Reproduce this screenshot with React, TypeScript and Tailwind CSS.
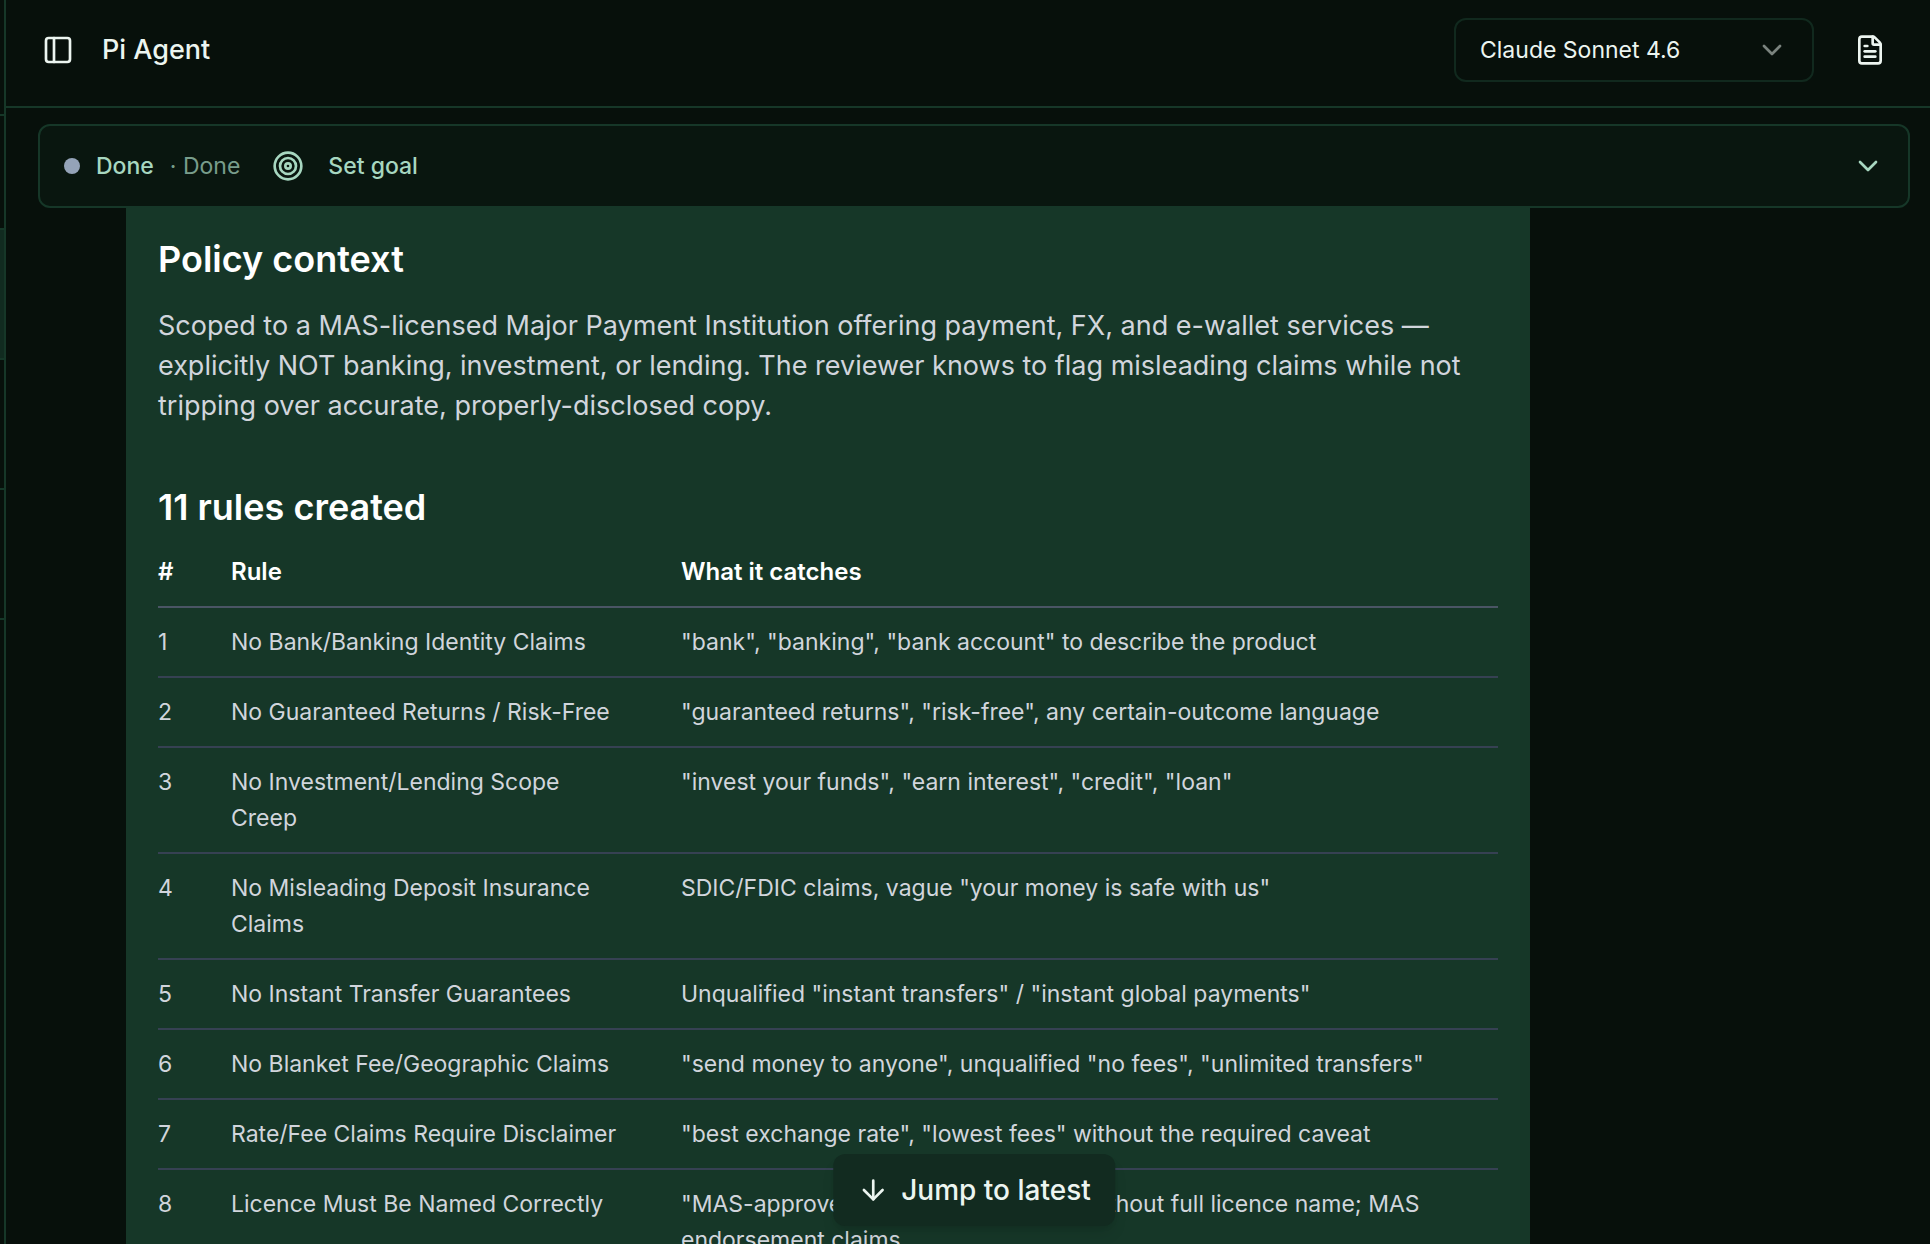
import { useState } from 'react';
import { ArrowDown, ChevronDown, FileText, PanelLeft, Target } from 'lucide-react';

type Rule = { id: number; name: string; catches: string };

const RULES: Rule[] = [
  { id: 1, name: 'No Bank/Banking Identity Claims', catches: '"bank", "banking", "bank account" to describe the product' },
  { id: 2, name: 'No Guaranteed Returns / Risk-Free', catches: '"guaranteed returns", "risk-free", any certain-outcome language' },
  { id: 3, name: 'No Investment/Lending Scope Creep', catches: '"invest your funds", "earn interest", "credit", "loan"' },
  { id: 4, name: 'No Misleading Deposit Insurance Claims', catches: 'SDIC/FDIC claims, vague "your money is safe with us"' },
  { id: 5, name: 'No Instant Transfer Guarantees', catches: 'Unqualified "instant transfers" / "instant global payments"' },
  { id: 6, name: 'No Blanket Fee/Geographic Claims', catches: '"send money to anyone", unqualified "no fees", "unlimited transfers"' },
  { id: 7, name: 'Rate/Fee Claims Require Disclaimer', catches: '"best exchange rate", "lowest fees" without the required caveat' },
  { id: 8, name: 'Licence Must Be Named Correctly', catches: '"MAS-approved", "MAS-authorised" without full licence name; MAS endorsement claims' },
];

// Only the right edge of the session list is in view
function SessionRail() {
  return (
    <aside className="w-[6px] shrink-0 border-r-2 border-[#163728]">
      <div className="h-[116px] border-b-2 border-[#163728]" />
      <div className="h-[114px] border-b-2 border-[#163728]" />
      <div className="h-[130px] border-b-2 border-[#163728] bg-[#112b20]" />
      <div className="h-[130px] border-b-2 border-[#163728]" />
      <div className="h-[130px] border-b-2 border-[#163728]" />
    </aside>
  );
}

function Header() {
  const [model, setModel] = useState('sonnet-4.6');

  return (
    <header className="flex items-center justify-between border-b-2 border-[#163728] pt-[18px] pr-11 pb-6 pl-9">
      <div className="flex items-center gap-7">
        <button type="button" aria-label="Toggle sidebar">
          <PanelLeft className="size-8" />
        </button>
        <h1 className="text-[27px] leading-10 font-medium">Pi Agent</h1>
      </div>
      <div className="flex items-center gap-10">
        <div className="relative">
          <select
            aria-label="Model"
            value={model}
            onChange={(e) => setModel(e.target.value)}
            className="h-16 w-[360px] appearance-none rounded-xl border-2 border-[#11291e] bg-transparent px-6 text-[23px]"
          >
            <option value="sonnet-4.6">Claude Sonnet 4.6</option>
          </select>
          <ChevronDown className="pointer-events-none absolute top-4 right-[26px] size-8 opacity-50" />
        </div>
        <button type="button" aria-label="Open notes">
          <FileText className="size-8" />
        </button>
      </div>
    </header>
  );
}

function StatusBar() {
  return (
    <div className="flex h-[84px] items-center rounded-xl border-2 border-[#163728] bg-[#09160f] px-6 text-[23px] text-[#a7d7c0]">
      <span className="size-4 rounded-full bg-[#94a3b8]" />
      <span className="ml-4 font-medium">Done</span>
      <span className="ml-4 opacity-70">· Done</span>
      <button type="button" className="ml-8 flex items-center gap-6 font-medium">
        <Target className="size-8" />
        Set goal
      </button>
      <button type="button" aria-label="Expand status" className="ml-auto">
        <ChevronDown className="size-8" />
      </button>
    </div>
  );
}

function RulesTable() {
  return (
    <table className="w-full table-fixed text-left text-[23px] leading-9">
      <thead>
        <tr className="border-b-2 border-gray-600 text-2xl leading-9 text-white">
          <th className="w-[73px] py-4 font-semibold">#</th>
          <th className="w-[450px] py-4 pr-14 font-semibold">Rule</th>
          <th className="py-4 font-semibold">What it catches</th>
        </tr>
      </thead>
      <tbody>
        {RULES.map((rule) => (
          <tr key={rule.id} className="border-b-2 border-gray-700 align-top">
            <td className="py-4">{rule.id}</td>
            <td className="py-4 pr-14">{rule.name}</td>
            <td className="py-4 pr-14">{rule.catches}</td>
          </tr>
        ))}
      </tbody>
    </table>
  );
}

export default function App() {
  return (
    <div className="flex h-screen overflow-hidden bg-[#07100b] font-['Inter',sans-serif] text-[#ecf5f0]">
      <SessionRail />
      <main className="flex min-w-0 flex-1 flex-col">
        <Header />
        <div className="relative mr-5 ml-8 min-h-0 flex-1">
          <div className="h-full overflow-hidden pt-4">
            <StatusBar />
            <article className="ml-[88px] w-3/4 bg-[#163728] px-8 pt-7 text-gray-300">
              <h2 className="text-4xl leading-[46px] font-semibold text-white">Policy context</h2>
              <p className="mt-6 text-[27px] leading-10">
                Scoped to a MAS-licensed Major Payment Institution offering payment, FX, and e-wallet services —
                explicitly NOT banking, investment, or lending. The reviewer knows to flag misleading claims while not
                tripping over accurate, properly-disclosed copy.
              </p>
              <h2 className="mt-[58px] mb-2 text-4xl leading-[46px] font-semibold text-white">11 rules created</h2>
              <RulesTable />
            </article>
          </div>
          <button
            type="button"
            className="absolute bottom-[18px] left-1/2 flex h-18 -translate-x-1/2 items-center gap-3 rounded-xl bg-[#122b20] px-6 text-[28px] font-medium whitespace-nowrap shadow-lg"
          >
            <ArrowDown className="size-8" />
            Jump to latest
          </button>
        </div>
      </main>
    </div>
  );
}
